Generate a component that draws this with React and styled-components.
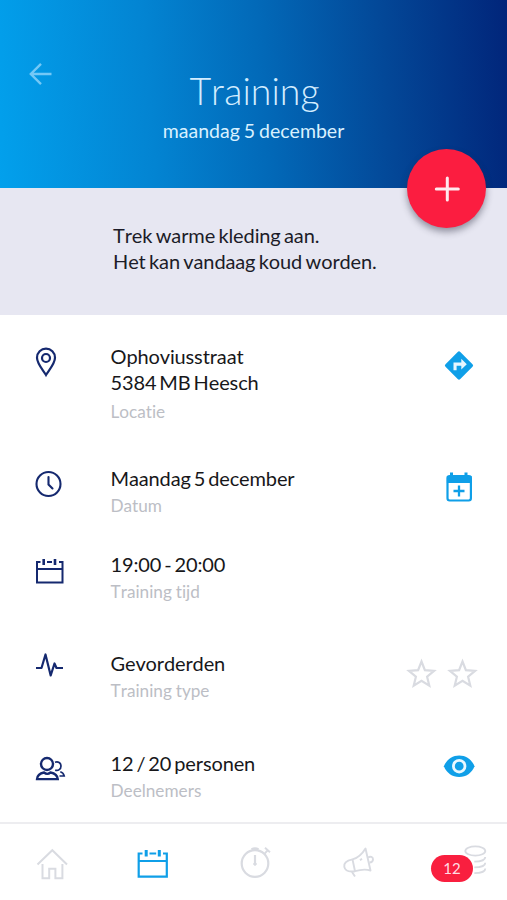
import React from "react";
import styled, { createGlobalStyle } from "styled-components";

const NAVY = "#15296f";
const BLUE = "#0f9fe8";
const GREY = "#d9dbe1";

export default function App() {
  return (
    <>
      <GlobalStyle />
      <Page>
        <Header>
          <BackBtn aria-label="Terug">
            <BackIcon />
          </BackBtn>
          <Title>Training</Title>
          <Subtitle>maandag 5 december</Subtitle>
        </Header>

        <Note>
          <AddBtn aria-label="Toevoegen">
            <PlusIcon />
          </AddBtn>
          <NoteText>Trek warme kleding aan.</NoteText>
          <NoteText>Het kan vandaag koud worden.</NoteText>
        </Note>

        <List>
          <Row $height={122}>
            <PinIcon />
            <Info>
              <Value>Ophoviusstraat</Value>
              <Value>5384 MB Heesch</Value>
              <Label $gap={4}>Locatie</Label>
            </Info>
            <Action>
              <RouteIcon />
            </Action>
          </Row>
          <Row $height={86}>
            <ClockIcon />
            <Info>
              <Value>Maandag 5 december</Value>
              <Label>Datum</Label>
            </Info>
            <Action>
              <CalendarAddIcon />
            </Action>
          </Row>
          <Row $height={99}>
            <CalendarIcon />
            <Info>
              <Value>19:00 - 20:00</Value>
              <Label>Training tijd</Label>
            </Info>
          </Row>
          <Row $height={100}>
            <PulseIcon />
            <Info>
              <Value>Gevorderden</Value>
              <Label>Training type</Label>
            </Info>
            <Stars>
              <StarIcon />
              <StarIcon />
            </Stars>
          </Row>
          <Row $height={71}>
            <PeopleIcon />
            <Info>
              <Value>12 / 20 personen</Value>
              <Label>Deelnemers</Label>
            </Info>
            <Action>
              <EyeIcon />
            </Action>
          </Row>
        </List>

        <TabBar>
          <Tab aria-label="Home">
            <HomeIcon />
          </Tab>
          <Tab aria-label="Agenda" $active>
            <TabCalendarIcon />
          </Tab>
          <Tab aria-label="Tijd">
            <StopwatchIcon />
          </Tab>
          <Tab aria-label="Nieuws">
            <MegaphoneIcon />
          </Tab>
          <Tab aria-label="Punten">
            <CoinsIcon />
            <Badge>12</Badge>
          </Tab>
        </TabBar>
      </Page>
    </>
  );
}

/* ================= icons ================= */

const BackIcon = () => (
  <Svg width="26" height="26" stroke="#74c8f6" strokeWidth="2.4">
    <path d="M25.500 13H5M15 2.800L4.800 13 15 23.200" />
  </Svg>
);

const PlusIcon = () => (
  <Svg width="26" height="26" stroke="#ffe9ee" strokeWidth="3" strokeLinecap="round">
    <path d="M13.300 2v22M2.300 13h22" />
  </Svg>
);

const PinIcon = () => (
  <Svg width="32" height="36" stroke={NAVY} strokeWidth="2.200">
    <path d="M13 31C10 26 4 19.500 4 13.700a9 9 0 0 1 18 0C22 19.500 16 26 13 31z" />
    <circle cx="13" cy="14" r="4" />
  </Svg>
);

const ClockIcon = () => (
  <Svg width="32" height="36" stroke={NAVY} strokeWidth="2.100">
    <circle cx="15.500" cy="18" r="12" />
    <path d="M15.500 11v7.500l4 4" strokeLinecap="round" />
  </Svg>
);

const CalendarIcon = () => (
  <Svg width="32" height="36" stroke={NAVY} strokeWidth="2">
    <path d="M7.500 10H4v20.500h25.500V10H26M14 10h5M4 17h25.500" />
    <path d="M10.700 7v6M22 7v6" strokeWidth="2.600" />
  </Svg>
);

const PulseIcon = () => (
  <Svg width="32" height="36" stroke={NAVY} strokeWidth="2.200" strokeLinejoin="round">
    <path d="M3 17h5.500L12.500 3.500l5.200 21L21.500 12.500l2 4.500H30" />
  </Svg>
);

const PeopleIcon = () => (
  <Svg width="34" height="36" stroke={NAVY} strokeWidth="2">
    <circle cx="14" cy="13" r="6" strokeWidth="2.400" />
    <path
      d="M4 28.200c.300-4 3.500-6 7-6.700 2 1.700 4.500 1.700 6.500 0 3.500.700 7 2.700 7.300 6.700z"
      strokeWidth="2.300"
    />
    <path d="M22 11.200c3-1.200 6 .500 6 3.700 0 3.300-2.800 5.300-5.800 4.200" strokeWidth="1.700" />
    <path d="M27.300 20.800c2.400.700 3.500 2.200 3.900 4.200h-4.700" strokeWidth="1.700" />
  </Svg>
);

const RouteIcon = () => (
  <Svg width="32" height="38">
    <path
      d="M14.700 8 2.500 20.200a1.800 1.800 0 0 0 0 2.600L14.700 35a1.800 1.800 0 0 0 2.600 0l12.200-12.200a1.800 1.800 0 0 0 0-2.600L17.300 8a1.800 1.800 0 0 0-2.600 0z"
      fill={BLUE}
    />
    <path d="M10.500 26.200v-7.700h7.800v-3.800l5.500 5.500-5.500 5.300v-3.700h-4.700v4.400z" fill="#e6f7ff" />
  </Svg>
);

const CalendarAddIcon = () => (
  <Svg width="32" height="38" stroke={BLUE} strokeWidth="2.200">
    <rect x="4.500" y="10" width="23.400" height="24.500" rx="2.200" />
    <path d="M5 11h22.500v5H5z" fill={BLUE} />
    <path d="M8.500 6.500V10M23 6.500V10" strokeWidth="3" />
    <path d="M16 19.500v11M10.500 25h11" strokeWidth="2.300" />
  </Svg>
);

const StarIcon = () => (
  <Svg width="32" height="40" stroke={GREY} strokeWidth="2.200">
    <path d="M15.500 10.500l3.400 8.600 9.200.800-7 5.800 2.200 9-7.800-4.800-7.800 4.800 2.200-9-7-5.800 9.200-.8z" />
  </Svg>
);

const EyeIcon = () => (
  <Svg width="32" height="36">
    <path d="M.900 15.200C3.500 8.500 9.300 4.400 16.200 4.400s12.700 4.100 15.300 10.800C28.900 21.900 23.100 26 16.200 26S3.500 21.900.900 15.200z" fill={BLUE} />
    <circle cx="16.200" cy="15.200" r="5.800" fill={BLUE} stroke="#e8f8ff" strokeWidth="2.800" />
  </Svg>
);

const HomeIcon = () => (
  <Svg width="36" height="36" stroke={GREY} strokeWidth="2">
    <path d="M3.500 19.500L18.300 5.200 33 19.500" />
    <path d="M8.500 19v14.300h6.700v-9.500h6.200v9.500h7V19" />
  </Svg>
);

const TabCalendarIcon = () => (
  <Svg width="36" height="36" stroke="currentColor" strokeWidth="2.200">
    <path d="M6.500 8.500H2.700v23.200h28.100V8.500H27M13.500 8.500h6.700M2.700 16h28.100" />
    <path d="M10.200 5v6.500M23.300 5v6.500" strokeWidth="3" />
  </Svg>
);

const StopwatchIcon = () => (
  <Svg width="36" height="36" stroke={GREY} strokeWidth="2.200">
    <circle cx="17" cy="18.500" r="13.300" />
    <path d="M13.500 4.500c2-1.300 5-1.300 7 0" />
    <path d="M27 2.800l5 4.400M29.700 5.200l-3 3.500" strokeWidth="1.900" />
    <path d="M17 10v8" />
    <circle cx="17" cy="19" r="1.300" fill={GREY} strokeWidth="1" />
  </Svg>
);

const MegaphoneIcon = () => (
  <Svg width="36" height="36" stroke={GREY} strokeWidth="1.900" strokeLinejoin="round">
    <path d="M12.500 14.400C7 15.500 3.500 17.500 4.300 21.800c.900 4.500 4.500 5.300 10.700 4.400" />
    <path d="M12.500 14.400C18 13 22.500 8.500 25.500 3.500L30.500 25.500C26 24 20.500 24.500 15 26.200z" />
    <path d="M28 12.500c2.500-1.500 5-.500 5 1.800 0 2-1.500 3.200-3.500 3.200M12 27l3 4.500M20 15.200l2-1.500" />
  </Svg>
);

const CoinsIcon = () => (
  <Svg width="48" height="36" stroke={GREY} strokeWidth="1.800">
    <ellipse cx="33.300" cy="6" rx="10" ry="4.600" />
    <path d="M43.300 12c0 2.800-4.500 4.700-11 4.700M43.300 17.700c0 2.800-4.500 4.700-11 4.700M43.300 23.400c0 2.800-4.500 4.700-11 4.700" />
  </Svg>
);

/* ================= styles ================= */

const GlobalStyle = createGlobalStyle`
  body {
    margin: 0;
    background: #fff;
    font-family: Lato, sans-serif;
    font-kerning: none;
    font-variant-ligatures: none;
  }
  button {
    border: 0;
    padding: 0;
    background: none;
    font-family: inherit;
    cursor: pointer;
  }
`;

const Svg = styled.svg`
  display: block;
  fill: none;
  flex: 0 0 auto;
`;

const Page = styled.main`
  width: 507px;
  height: 900px;
  display: flex;
  flex-direction: column;
  overflow: hidden;
  background: #fff;
`;

const Header = styled.header`
  position: relative;
  height: 188px;
  box-sizing: border-box;
  padding-top: 68px;
  text-align: center;
  background: linear-gradient(86deg, #02a0ec 0%, #0384d2 30%, #0269b8 52%, #034797 76%, #01257a 100%);
`;

const BackBtn = styled.button`
  position: absolute;
  left: 26px;
  top: 61px;
`;

const Title = styled.h1`
  margin: 0 0 0 2px;
  font-size: 37.5px;
  line-height: 46px;
  font-weight: 300;
  color: #d3edff;
`;

const Subtitle = styled.p`
  margin: 5px 0 0;
  font-size: 19.5px;
  line-height: 24px;
  word-spacing: -1px;
  color: #d9f1ff;
`;

const Note = styled.section`
  position: relative;
  height: 127px;
  box-sizing: border-box;
  padding: 34px 0 0 113px;
  background: #e7e7f2;
`;

const NoteText = styled.p`
  margin: 0;
  font-size: 20px;
  line-height: 26px;
  letter-spacing: -0.12px;
  word-spacing: -1.6px;
  color: #1c1c28;
`;

/* half over de header */
const AddBtn = styled.button`
  position: absolute;
  right: 21px;
  top: -39px;
  width: 79px;
  height: 79px;
  border-radius: 50%;
  display: flex;
  align-items: center;
  justify-content: center;
  && {
    background: #fb1d40;
  }
  box-shadow: 0 4px 7px rgba(40, 40, 60, 0.45);
`;

const List = styled.section`
  flex: 1 1 auto;
  padding: 29px 28px 0 33px;
`;

const Row = styled.article`
  display: grid;
  grid-template-columns: 77.5px 1fr auto;
  align-items: start;
  height: ${({ $height }) => $height}px;
`;

const Info = styled.div`
  min-width: 0;
  margin-top: -1px;
`;

const Value = styled.p`
  margin: 0;
  font-size: 20px;
  line-height: 26px;
  letter-spacing: -0.13px;
  word-spacing: -2px;
  color: #17171a;
`;

const Label = styled.p`
  margin: ${({ $gap = 2 }) => $gap}px 0 0;
  font-size: 17.2px;
  line-height: 26px;
  word-spacing: -0.5px;
  color: #bcbec5;
`;

const Action = styled.div`
  margin-right: 4px;
`;

const Stars = styled.div`
  display: flex;
  gap: 9px;
`;

const TabBar = styled.nav`
  flex: 0 0 78px;
  box-sizing: border-box;
  border-top: 2px solid #ededf0;
  padding: 21px 0 0 34px;
  display: grid;
  grid-template-columns: repeat(4, 102px) 1fr;
  align-items: start;
`;

const Tab = styled.button`
  position: relative;
  display: flex;
  color: ${({ $active }) => ($active ? BLUE : GREY)};
`;

const Badge = styled.span`
  position: absolute;
  left: -11px;
  top: 10px;
  width: 42px;
  height: 27px;
  border-radius: 14px;
  background: #f91f3f;
  color: #ffdce3;
  font-size: 15px;
  line-height: 27px;
  text-align: center;
`;
